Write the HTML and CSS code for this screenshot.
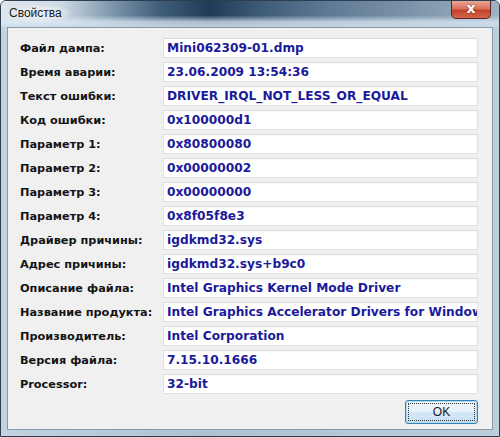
FILE: index.html
```html
<!DOCTYPE html>
<html>
<head>
<meta charset="utf-8">
<link rel="stylesheet" href="styles.css">
</head>
<body>
<div class="window">
  <div class="titlebar">
    <span class="title">Свойства</span>
    <div class="close"><span>x</span></div>
  </div>
  <div class="client">
    <div class="rows">
      <div class="row"><div class="label">Файл дампа:</div><div class="value">Mini062309-01.dmp</div></div>
      <div class="row"><div class="label">Время аварии:</div><div class="value">23.06.2009 13:54:36</div></div>
      <div class="row"><div class="label">Текст ошибки:</div><div class="value">DRIVER_IRQL_NOT_LESS_OR_EQUAL</div></div>
      <div class="row"><div class="label">Код ошибки:</div><div class="value">0x100000d1</div></div>
      <div class="row"><div class="label">Параметр 1:</div><div class="value">0x80800080</div></div>
      <div class="row"><div class="label">Параметр 2:</div><div class="value">0x00000002</div></div>
      <div class="row"><div class="label">Параметр 3:</div><div class="value">0x00000000</div></div>
      <div class="row"><div class="label">Параметр 4:</div><div class="value">0x8f05f8e3</div></div>
      <div class="row"><div class="label">Драйвер причины:</div><div class="value">igdkmd32.sys</div></div>
      <div class="row"><div class="label">Адрес причины:</div><div class="value">igdkmd32.sys+b9c0</div></div>
      <div class="row"><div class="label">Описание файла:</div><div class="value">Intel Graphics Kernel Mode Driver</div></div>
      <div class="row"><div class="label">Название продукта:</div><div class="value">Intel Graphics Accelerator Drivers for Windows Vista(R)</div></div>
      <div class="row"><div class="label">Производитель:</div><div class="value">Intel Corporation</div></div>
      <div class="row"><div class="label">Версия файла:</div><div class="value">7.15.10.1666</div></div>
      <div class="row"><div class="label">Processor:</div><div class="value">32-bit</div></div>
    </div>
    <div class="buttons">
      <button class="ok"><span class="focus">OK</span></button>
    </div>
  </div>
</div>
</body>
</html>
```
FILE: styles.css
```css
html, body {
  margin: 0;
  padding: 0;
  width: 500px;
  height: 437px;
  overflow: hidden;
  background: #ffffff;
}

.window {
  box-sizing: border-box;
  width: 500px;
  height: 437px;
  border: 1px solid #2c3e50;
  border-radius: 6px 6px 0 0;
  background:
    linear-gradient(to right, #c3d3e0 0%, #aec2d2 40%, #bccddb 100%);
  display: flex;
  flex-direction: column;
  padding: 0 6px 6px 6px;
  position: relative;
}

.titlebar {
  height: 26px;
  margin: 0 -6px;
  padding: 0 6px;
  display: flex;
  align-items: center;
  border-radius: 5px 5px 0 0;
  background:
    linear-gradient(to bottom, rgba(255,255,255,0.0) 0%, rgba(255,255,255,0.0) 55%, rgba(220,232,244,0.75) 80%, rgba(205,220,235,0.9) 100%),
    linear-gradient(to right, #dfe6ec 0%, #cfdae3 12%, #7f98ae 22%, #3f5c78 32%, #1f3b58 42%, #3d5a77 52%, #5c7893 65%, #7890a6 80%, #8ea4b8 92%, #9fb2c3 100%);
  font-family: "Liberation Sans", "DejaVu Sans", sans-serif;
}

.title {
  font-size: 12px;
  color: #1b1b1b;
  margin-top: -2px;
  background: radial-gradient(ellipse at center, rgba(230,236,241,0.9) 40%, rgba(230,236,241,0) 75%);
  padding: 2px 8px 2px 2px;
}

.close {
  position: absolute;
  top: 0;
  right: 8px;
  width: 40px;
  height: 18px;
  box-sizing: border-box;
  border: 1px solid #5a2a22;
  border-top: none;
  border-radius: 0 0 5px 5px;
  background: linear-gradient(to bottom, #e9a896 0%, #d8735e 45%, #c4412a 55%, #d4654a 100%);
  display: flex;
  align-items: center;
  justify-content: center;
}

.close span {
  color: #ffffff;
  font-family: "DejaVu Sans", sans-serif;
  font-weight: bold;
  font-size: 14px;
  line-height: 14px;
  margin-top: -3px;
  text-shadow: 0 0 2px #7a2a1a;
}

.client {
  flex: 1;
  background: #f0f0f0;
  border: 1px solid #8a9aa8;
  display: flex;
  flex-direction: column;
  padding: 10px 13px 5px 12px;
}

.rows {
  display: flex;
  flex-direction: column;
  gap: 4px;
}

.row {
  display: flex;
  align-items: center;
  height: 20px;
}

.label {
  width: 143px;
  flex: none;
  font-family: "DejaVu Sans", sans-serif;
  font-weight: bold;
  font-size: 11.3px;
  color: #141414;
}

.value {
  box-sizing: border-box;
  width: 315px;
  height: 20px;
  background: #ffffff;
  border: 1px solid #e2e2e2;
  border-top-color: #dadada;
  padding: 0 3px;
  font-family: "DejaVu Sans", sans-serif;
  font-weight: bold;
  font-size: 12.2px;
  line-height: 18px;
  color: #1a1a9a;
  white-space: nowrap;
  overflow: hidden;
}

.buttons {
  margin-top: auto;
  display: flex;
  justify-content: flex-end;
}

.ok {
  width: 73px;
  height: 24px;
  box-sizing: border-box;
  border: 1px solid #3c7fb1;
  border-radius: 3px;
  background: linear-gradient(to bottom, #f4f9fd 0%, #e6f1f9 50%, #d5e7f5 51%, #c9e0f2 100%);
  box-shadow: inset 0 0 0 1px #a8dcf8;
  padding: 2px;
  margin-right: 1px;
  font-family: "Liberation Sans", "DejaVu Sans", sans-serif;
  font-size: 12px;
  color: #1a1a1a;
  display: flex;
}

.focus {
  flex: 1;
  border: 1px dotted #333333;
  display: flex;
  align-items: center;
  justify-content: center;
  line-height: 14px;
}
```
